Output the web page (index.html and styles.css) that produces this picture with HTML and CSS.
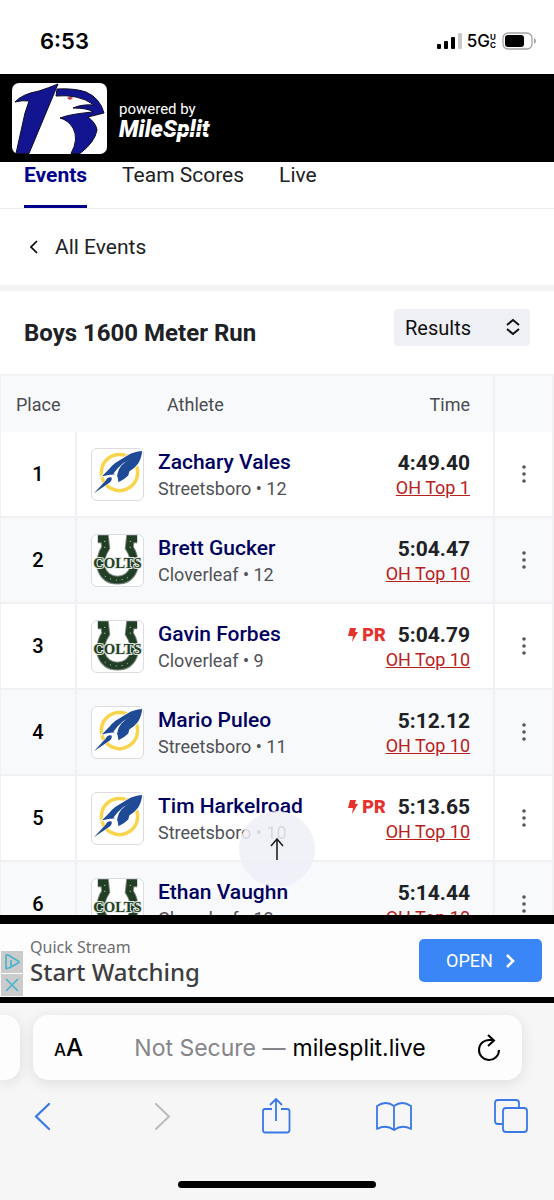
FILE: index.html
```html
<!DOCTYPE html>
<html lang="en">
<head>
  <meta charset="UTF-8">
  <meta name="viewport" content="width=device-width, initial-scale=1">
  <title>Boys 1600 Meter Run</title>
  <link rel="stylesheet" href="styles.css">
</head>
<body>

  <!-- shared drawings -->
  <svg class="sprites" aria-hidden="true">
    <symbol id="rocket" viewBox="0 0 52 52">
      <circle cx="28" cy="24" r="18.500" fill="none" stroke="#f8d54d" stroke-width="3.600"/>
      <path d="M51 2Q42 3 37 6L24 14Q20 17 18 20L10 28Q17 26 22 26L26 28L27 34Q33 31 37 27L38 23Q44 19 47 15Q51 8 51 2Z" fill="#1f4a96" stroke="#fff" stroke-width="1.500" paint-order="stroke"/>
      <path d="M39 10L30 17L27 22L25 29L22 25L26 20L31 15Z" fill="#fff"/>
      <path d="M39 10Q34 12 30 17L27 22L31 20Q37 15 39 10Z" fill="#1f4a96"/>
      <path d="M20 29Q16 28 14 32L2 45L17 35Q21 32 20 29Z" fill="#1f4a96" stroke="#fff" stroke-width="1" paint-order="stroke"/>
    </symbol>
    <symbol id="colts" viewBox="0 0 52 52">
      <path d="M6 4H13L14 13Q8 22 9 33Q13 46 26 46Q39 46 43 33Q44 22 38 13L39 4H46" fill="none" stroke="#7d867f" stroke-width="9"/>
      <path d="M6 4H13L14 13Q8 22 9 33Q13 46 26 46Q39 46 43 33Q44 22 38 13L39 4H46" fill="none" stroke="#213f24" stroke-width="7"/>
      <path d="M13 6L13 16M39 6L39 16M13 42Q26 50 39 42" fill="none" stroke="#dfe5df" stroke-width="1" stroke-dasharray="1 5"/>
      <text x="26" y="34" text-anchor="middle" class="colts-word">COLTS</text>
    </symbol>
    <symbol id="bolt" viewBox="0 0 10 14">
      <path d="M2 0H8L7 4H10L4 14L5 8H0Z" fill="#e5322d"/>
    </symbol>
    <symbol id="dots" viewBox="0 0 6 20">
      <circle cx="3" cy="3" r="1.800"/><circle cx="3" cy="10" r="1.800"/><circle cx="3" cy="17" r="1.800"/>
    </symbol>
  </svg>

  <div class="status">
    <span class="clock">6:53</span>
    <div class="status-right">
      <svg width="26" height="17" viewBox="0 0 26 17">
        <rect x="0" y="11" width="4" height="5" rx="1"/>
        <rect x="7" y="8" width="4" height="8" rx="1"/>
        <rect x="14" y="4" width="4" height="12" rx="1"/>
        <rect x="21" y="0" width="4" height="16" rx="1" fill="#c9c9c9"/>
      </svg>
      <span class="network">5G</span>
      <span class="uc"><span>U</span><span>C</span></span>
      <svg class="battery" width="35" height="18" viewBox="0 0 35 18">
        <rect x="1" y="1" width="29" height="16" rx="5" fill="none" stroke="#a3a3a3" stroke-width="1.3"/>
        <rect x="3" y="3" width="19" height="12" rx="3"/>
        <path d="M32 6Q34 7 34 9Q34 11 32 12Z" fill="#a3a3a3"/>
      </svg>
    </div>
  </div>

  <header class="brand">
    <svg class="brand-logo" viewBox="0 0 95 71">
      <rect width="95" height="71" rx="7" fill="#fff"/>
      <g fill="#131590" stroke="#0c0c26" stroke-width="1">
        <path d="M46 1Q36 5 27 8Q10 11 3 19Q10 17 17 18L13 30L4 70.500H17L31 37Z"/>
        <path d="M45 6Q62 5 74 9Q88 15 92 30Q84 32 76 34Q84 40 85 47Q83 59 68 70.500H59Q67 56 61 45Q56 37 48 35Q58 31 81 29Q76 25 61 25Q70 21 82 22Q74 16 64 14Q54 12 44 13Z"/>
      </g>
      <path d="M55 15Q58 13 61 15L58 17Z" fill="#c9393f"/>
    </svg>
    <div class="brand-text">
      <span class="powered">powered by</span>
      <span class="milesplit">MileSplit</span>
    </div>
  </header>

  <main>
    <nav class="tabs">
      <a class="active" href="#">Events</a>
      <a href="#">Team Scores</a>
      <a href="#">Live</a>
    </nav>

    <a class="back" href="#">
      <svg width="9" height="14" viewBox="0 0 9 14"><path d="M8 1L2 7L8 13" fill="none" stroke="#000" stroke-width="1.7"/></svg>
      All Events
    </a>

    <div class="event-head">
      <h1>Boys 1600 Meter Run</h1>
      <div class="picker">
        <select aria-label="View">
          <option>Results</option>
        </select>
        <svg width="16" height="18" viewBox="0 0 16 18"><path d="M2 7L8 2L14 7M2 11L8 16L14 11" fill="none" stroke="#111" stroke-width="2"/></svg>
      </div>
    </div>

    <table class="results">
      <thead>
        <tr>
          <th class="place">Place</th>
          <th class="who">Athlete</th>
          <th class="time">Time</th>
          <th class="more"></th>
        </tr>
      </thead>
      <tbody>
        <tr>
          <td class="place">1</td>
          <td><div class="athlete"><svg class="team"><use href="#rocket"/></svg><div><a href="#">Zachary Vales</a><p>Streetsboro • 12</p></div></div></td>
          <td class="time"><div class="mark">4:49.40</div><a href="#">OH Top 1</a></td>
          <td class="more"><button aria-label="More"><svg width="6" height="20"><use href="#dots"/></svg></button></td>
        </tr>
        <tr>
          <td class="place">2</td>
          <td><div class="athlete"><svg class="team"><use href="#colts"/></svg><div><a href="#">Brett Gucker</a><p>Cloverleaf • 12</p></div></div></td>
          <td class="time"><div class="mark">5:04.47</div><a href="#">OH Top 10</a></td>
          <td class="more"><button aria-label="More"><svg width="6" height="20"><use href="#dots"/></svg></button></td>
        </tr>
        <tr>
          <td class="place">3</td>
          <td><div class="athlete"><svg class="team"><use href="#colts"/></svg><div><a href="#">Gavin Forbes</a><p>Cloverleaf • 9</p></div></div></td>
          <td class="time"><div class="mark"><span class="pr"><svg width="10" height="14"><use href="#bolt"/></svg>PR</span>5:04.79</div><a href="#">OH Top 10</a></td>
          <td class="more"><button aria-label="More"><svg width="6" height="20"><use href="#dots"/></svg></button></td>
        </tr>
        <tr>
          <td class="place">4</td>
          <td><div class="athlete"><svg class="team"><use href="#rocket"/></svg><div><a href="#">Mario Puleo</a><p>Streetsboro • 11</p></div></div></td>
          <td class="time"><div class="mark">5:12.12</div><a href="#">OH Top 10</a></td>
          <td class="more"><button aria-label="More"><svg width="6" height="20"><use href="#dots"/></svg></button></td>
        </tr>
        <tr>
          <td class="place">5</td>
          <td><div class="athlete"><svg class="team"><use href="#rocket"/></svg><div><a href="#">Tim Harkelroad</a><p>Streetsboro • 10</p></div></div></td>
          <td class="time"><div class="mark"><span class="pr"><svg width="10" height="14"><use href="#bolt"/></svg>PR</span>5:13.65</div><a href="#">OH Top 10</a></td>
          <td class="more"><button aria-label="More"><svg width="6" height="20"><use href="#dots"/></svg></button></td>
        </tr>
        <tr>
          <td class="place">6</td>
          <td><div class="athlete"><svg class="team"><use href="#colts"/></svg><div><a href="#">Ethan Vaughn</a><p>Cloverleaf • 12</p></div></div></td>
          <td class="time"><div class="mark">5:14.44</div><a href="#">OH Top 10</a></td>
          <td class="more"><button aria-label="More"><svg width="6" height="20"><use href="#dots"/></svg></button></td>
        </tr>
      </tbody>
    </table>

    <button class="to-top" aria-label="Back to top">
      <svg width="14" height="22" viewBox="0 0 14 22"><path d="M7 22V1M1 8L7 1L13 8" fill="none" stroke="#222" stroke-width="1.6"/></svg>
    </button>
  </main>

  <aside class="ad">
    <div class="ad-choices">
      <button aria-label="Ad choices"><svg width="18" height="18" viewBox="0 0 18 18"><path d="M3 16V3Q3 1 5 2L15 8Q17 9 15 10L8 14V7M3 16L8 14" fill="none" stroke="#4bb3cc" stroke-width="1.7"/></svg></button>
      <button aria-label="Close ad"><svg width="18" height="18" viewBox="0 0 18 18"><path d="M3 3L15 15M15 3L3 15" fill="none" stroke="#4bb3cc" stroke-width="1.7"/></svg></button>
    </div>
    <div class="ad-text">
      <span>Quick Stream</span>
      <strong>Start Watching</strong>
    </div>
    <button class="open">OPEN
      <svg width="10" height="14" viewBox="0 0 10 14"><path d="M2 1L8 7L2 13" fill="none" stroke="#fff" stroke-width="2.6"/></svg>
    </button>
  </aside>

  <footer class="browser">
    <div class="address-row">
      <div class="tab-edge"></div>
      <div class="address">
        <button class="reader" aria-label="Page settings"><small>A</small>A</button>
        <button class="url"><span>Not Secure —</span> milesplit.live</button>
        <button class="reload" aria-label="Reload">
          <svg width="24" height="28" viewBox="0 0 24 28"><path d="M13 6A10 10 0 1 0 22 16M11 1L17 6.500L11 12M12 6H16" fill="none" stroke="#000" stroke-width="2"/></svg>
        </button>
      </div>
    </div>
    <div class="toolbar">
      <button aria-label="Back"><svg width="34" height="36" viewBox="0 0 34 36"><path d="M23 6L10 18.500L23 31" fill="none" stroke="#3b78e7" stroke-width="2.200" stroke-linecap="round"/></svg></button>
      <button aria-label="Forward"><svg width="34" height="36" viewBox="0 0 34 36"><path d="M13 6L26 18.500L13 31" fill="none" stroke="#bbb" stroke-width="2" stroke-linecap="round"/></svg></button>
      <button aria-label="Share"><svg width="34" height="36" viewBox="0 0 34 36"><path d="M13 11H6Q4 11 4 13V32Q4 34.500 6 34.500H28Q30.500 34.500 30.500 32V13Q30.500 11 28 11H22M17 23V1M11 7L17 1L23 7" fill="none" stroke="#3b78e7" stroke-width="1.800"/></svg></button>
      <button aria-label="Bookmarks"><svg width="36" height="36" viewBox="0 0 36 36"><path d="M18 8Q10 2 1 8V31Q10 26 18 32Q26 26 35 31V8Q26 2 18 8ZM18 8V32" fill="none" stroke="#3b78e7" stroke-width="1.800" stroke-linejoin="round"/></svg></button>
      <button aria-label="Tabs"><svg width="34" height="36" viewBox="0 0 34 36"><path d="M9 26H4Q1 26 1 23V5Q1 2 4 2H22Q25 2 25 5V10" fill="none" stroke="#3b78e7" stroke-width="1.800"/><rect x="9" y="10" width="24" height="24" rx="3" fill="none" stroke="#3b78e7" stroke-width="1.800"/></svg></button>
    </div>
    <div class="home-bar"></div>
  </footer>

</body>
</html>
```
FILE: styles.css
```css
* {
  box-sizing: border-box;
}
body {
  margin: 0;
  height: 100vh;
  display: flex;
  flex-direction: column;
  background: #fff;
  color: #202124;
  font-family: Roboto, sans-serif;
  font-size: 21px;
}
a {
  color: inherit;
  text-decoration: none;
}
button {
  display: flex;
  align-items: center;
  justify-content: center;
  padding: 0;
  border: none;
  background: none;
  color: inherit;
  font: inherit;
}
svg {
  display: block;
  flex: none;
}
.sprites {
  position: absolute;
  width: 0;
  height: 0;
}

/* phone status bar */
.status {
  height: 74px;
  padding: 8px 17px 0 40px;
  display: flex;
  align-items: center;
  justify-content: space-between;
  flex: none;
  color: #000;
  font-family: Inter, sans-serif;
}
.clock {
  font-size: 22px;
  font-weight: 600;
}
.status-right {
  display: flex;
  align-items: center;
}
.network {
  margin-left: 4px;
  font-size: 17px;
  font-weight: 500;
}
.uc {
  display: grid;
  font-size: 8px;
  line-height: 8px;
  font-weight: 700;
}
.battery {
  margin-left: 6px;
}

/* site header */
.brand {
  height: 88px;
  padding: 0 12px;
  display: flex;
  align-items: center;
  gap: 12px;
  flex: none;
  background: #000;
  color: #fff;
}
.brand-logo {
  width: 95px;
  height: 71px;
}
.brand-text {
  display: flex;
  flex-direction: column;
  padding-top: 4px;
}
.powered {
  font-size: 15px;
  line-height: 20px;
}
.milesplit {
  position: relative;
  font-size: 23px;
  line-height: 22px;
  font-weight: 900;
  font-style: italic;
}
.milesplit::after {
  content: "";
  position: absolute;
  left: 46px;
  right: 0;
  top: 12px;
  height: 1px;
  background: #000;
}

main {
  position: relative;
  flex: 1;
  min-height: 0;
  overflow: hidden;
}
.tabs {
  display: flex;
  gap: 35px;
  padding: 0 24px;
  border-bottom: 1px solid #ececee;
  line-height: 26px;
}
.tabs a {
  padding-bottom: 17px;
  border-bottom: 3px solid transparent;
}
.tabs .active {
  color: #00008b;
  border-color: #00008b;
  font-weight: 700;
}
.back {
  display: flex;
  align-items: center;
  gap: 17px;
  height: 77px;
  padding: 0 29px;
  border-bottom: 1px solid #f3f3f4;
}
.event-head {
  display: flex;
  align-items: center;
  justify-content: space-between;
  height: 90px;
  padding: 0 24px;
  border-top: 5px solid #f3f3f4;
  border-bottom: 2px solid #f3f3f4;
}
h1 {
  margin: 0;
  font-size: 24px;
  font-weight: 700;
}
.picker {
  position: relative;
  margin-bottom: 10px;
}
.picker select {
  appearance: none;
  width: 136px;
  height: 37px;
  padding: 0 11px;
  border: none;
  border-radius: 4px;
  background: #efeff6;
  color: #111;
  font: inherit;
  font-size: 20px;
}
.picker svg {
  position: absolute;
  right: 9px;
  top: 9px;
  pointer-events: none;
}

/* results table */
.results {
  width: 100%;
  border-collapse: separate;
  border-spacing: 0;
  border-left: 1px solid #f1f1f4;
  border-right: 2px solid #f1f1f4;
}
.results th {
  height: 56px;
  padding: 0;
  background: #f8f9fb;
  color: #4a4b50;
  font-size: 18px;
  font-weight: 400;
  text-align: left;
}
.results td {
  height: 86px;
  padding: 0;
  border-bottom: 2px solid #f1f1f4;
}
.results tr:nth-child(even) td {
  background: #f8f9fb;
}
.results .place {
  width: 76px;
}
.results th.place {
  padding-left: 15px;
}
.results th.who {
  padding-left: 90px;
}
.results td.place {
  border-right: 2px solid #f1f1f4;
  color: #000;
  font-size: 20px;
  font-weight: 500;
  text-align: center;
}
.results .time {
  padding-right: 23px;
  border-right: 2px solid #f1f1f4;
  text-align: right;
}
.results td.time {
  padding-top: 3px;
}
.results .more {
  width: 57px;
}
.more button {
  width: 100%;
  height: 40px;
}
.more svg {
  fill: #55565a;
}
.athlete {
  display: flex;
  align-items: center;
  gap: 14px;
  padding-left: 14px;
}
.athlete div {
  padding-top: 2px;
}
.athlete a {
  color: #00005f;
  font-weight: 500;
  line-height: 28px;
}
.athlete p {
  margin: 0;
  color: #505156;
  font-size: 18px;
  line-height: 26px;
}
.team {
  width: 53px;
  height: 53px;
  border: 1px solid #dcdce0;
  border-radius: 6px;
  background: #fff;
}
.colts-word {
  font: bold 15px "Liberation Serif", serif;
  fill: #213f24;
  stroke: #e8ece8;
  stroke-width: 2px;
  paint-order: stroke;
}
.mark {
  display: flex;
  align-items: center;
  justify-content: flex-end;
  gap: 12px;
  font-weight: 700;
  line-height: 24px;
}
.time a {
  color: #b8201c;
  font-size: 18px;
  line-height: 26px;
  text-decoration: underline;
}
.pr {
  display: flex;
  align-items: center;
  gap: 4px;
  color: #e5322d;
  font-size: 18px;
  font-weight: 900;
}
.to-top {
  position: absolute;
  left: 50%;
  bottom: 28px;
  width: 76px;
  height: 76px;
  margin-left: -38px;
  border-radius: 50%;
  background: rgba(239, 240, 247, 0.85);
}

/* bottom banner */
.ad {
  position: relative;
  display: flex;
  align-items: center;
  justify-content: space-between;
  flex: none;
  height: 88px;
  padding: 0 12px 0 30px;
  border-top: 9px solid #000;
  border-bottom: 6px solid #000;
  background: #fdfdfd;
}
.ad-choices {
  position: absolute;
  left: 1px;
  bottom: 1px;
  display: grid;
  gap: 1px;
}
.ad-choices button {
  width: 22px;
  height: 22px;
  background: #cbcbcb;
}
.ad-text {
  display: flex;
  flex-direction: column;
  color: #6c6d70;
  font-family: "Noto Sans", sans-serif;
  font-size: 16px;
  line-height: 22px;
}
.ad-text strong {
  color: #3c3d40;
  font-size: 24px;
  line-height: 28px;
  font-weight: 500;
}
.open {
  gap: 12px;
  width: 123px;
  height: 43px;
  border-radius: 5px;
  background: #3b86f7;
  color: #fff;
  font-size: 18px;
}

/* browser chrome */
.browser {
  flex: none;
  height: 197px;
  background: #f6f6f7;
  color: #000;
  font-family: Inter, sans-serif;
  overflow: hidden;
}
.address-row {
  display: flex;
  gap: 13px;
  padding: 12px 32px 0 0;
}
.tab-edge {
  width: 20px;
  background: #fdfdfd;
  border-radius: 0 15px 15px 0;
  box-shadow: 0 3px 14px rgba(0, 0, 0, 0.1);
}
.address {
  display: flex;
  align-items: center;
  justify-content: space-between;
  flex: 1;
  height: 65px;
  padding: 0 21px;
  background: #fdfdfd;
  border-radius: 15px;
  box-shadow: 0 3px 14px rgba(0, 0, 0, 0.1);
}
.reader {
  align-items: baseline;
  font-size: 24px;
  font-weight: 500;
}
.reader small {
  font-size: 17px;
}
.url {
  gap: 7px;
  font-size: 23px;
}
.url span {
  color: #858589;
}
.toolbar {
  display: flex;
  justify-content: space-between;
  padding: 18px 26px 0;
}
.home-bar {
  width: 198px;
  height: 7px;
  margin: 47px auto 0;
  border-radius: 4px;
  background: #000;
}
```
